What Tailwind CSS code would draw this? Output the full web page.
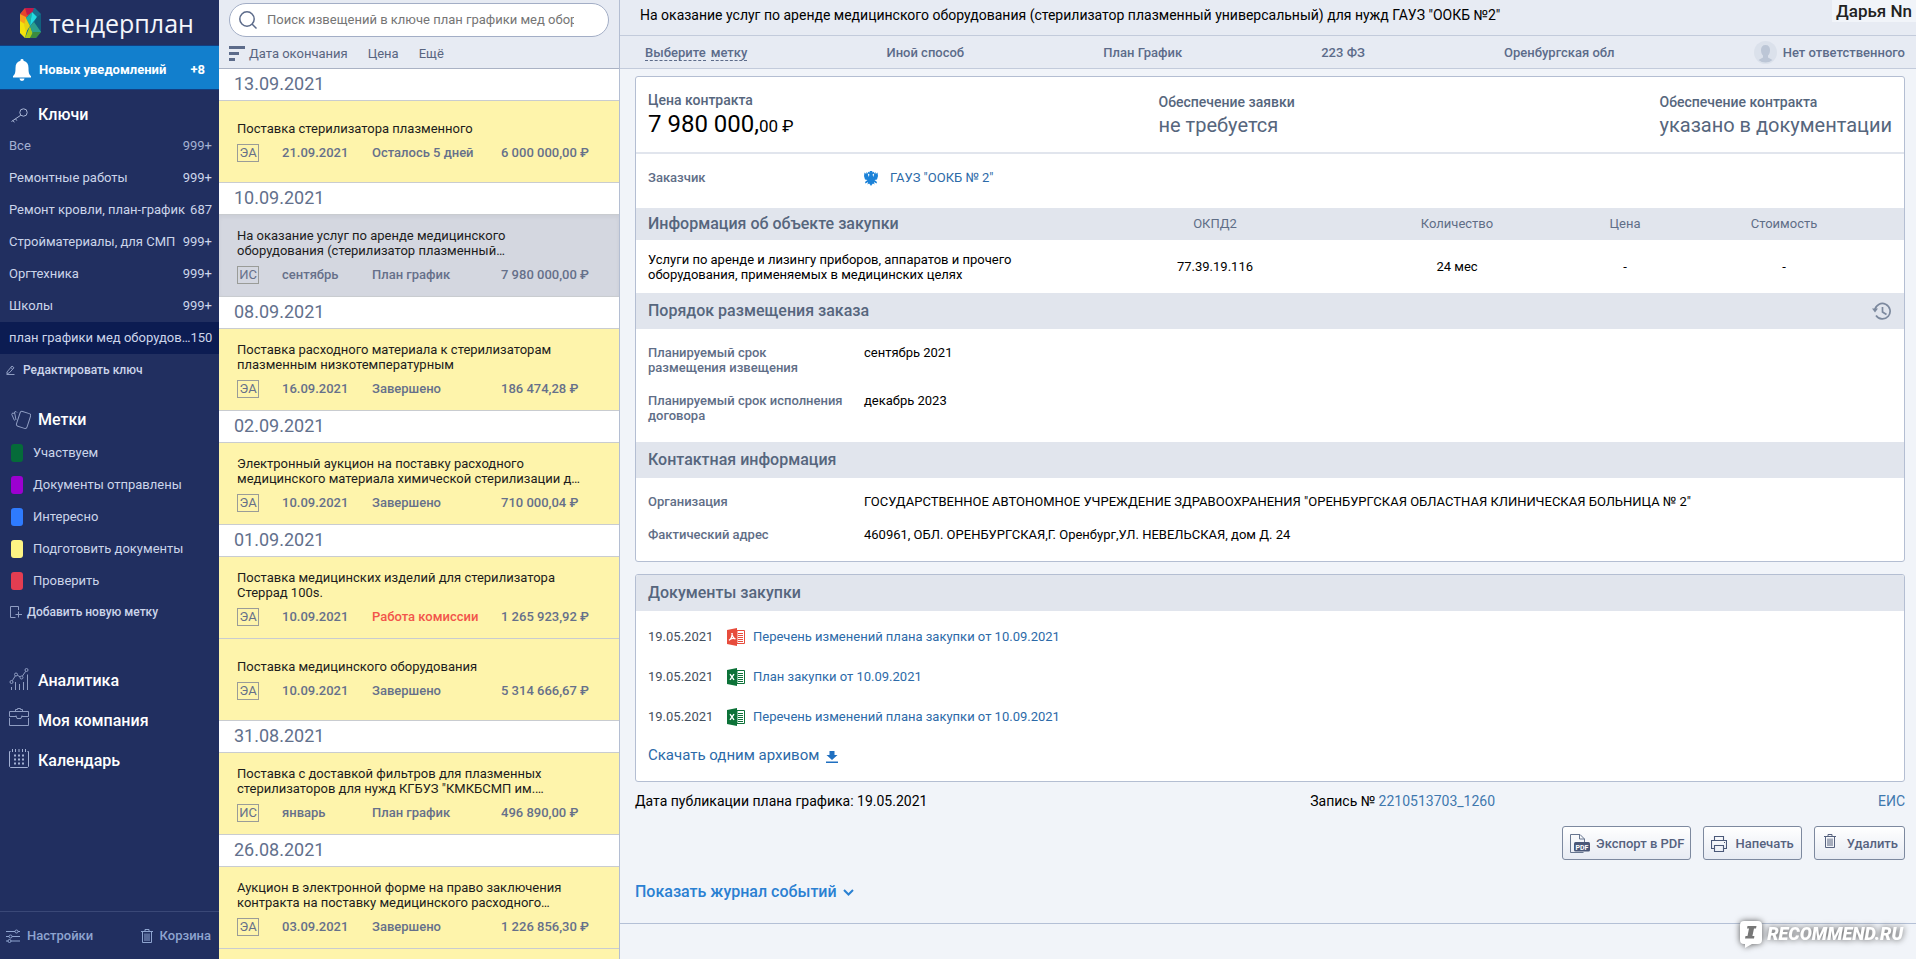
<!DOCTYPE html>
<html lang="ru">
<head>
<meta charset="utf-8">
<title>Тендерплан</title>
<script src="https://cdn.jsdelivr.net/npm/@tailwindcss/browser@4"></script>
</head>
<body class="flex h-screen overflow-hidden bg-[#f1f4f9] font-['Roboto','Noto_Sans',sans-serif] text-[13px] text-black">

<svg class="hidden" aria-hidden="true">
  <symbol id="trash" viewBox="0 0 12 14"><g fill="none" stroke="currentColor"><path d="M0 2.500h12M4 2V.5h4V2M1.500 2.500v11h9v-11M4 4.500v7.500M6 4.500v7.500M8 4.500v7.500"/></g></symbol>
  <symbol id="excel" viewBox="0 0 18 18"><path d="M10 2.500h7.500v13H10z" fill="#fff" stroke="#0c7238"/><path d="M11 5.500h5M11 7.500h5M11 9.500h5M11 11.500h5M11 13.500h5" stroke="#0c7238"/><path d="M0 2 10 0v18L0 16z" fill="#0c7238"/><path d="m3 6.200 4 5.600M7 6.200l-4 5.600" stroke="#fff" stroke-width="1.400"/></symbol>
  <symbol id="pdf" viewBox="0 0 18 18"><path d="M10 2.500h7.500v13H10z" fill="#fff" stroke="#e74c3c"/><path d="M11 5.500h5M11 7.500h5M11 9.500h5M11 11.500h5M11 13.500h5" stroke="#e74c3c"/><path d="M0 2 10 0v18L0 16z" fill="#e74c3c"/><path d="M4.800 5c.4 3 1.200 5 3.700 6M2 12.300c2-1.200 3.200-3.500 3.200-7.300M2 12.300c1.500-1.800 3.800-2.300 6.500-1.500" fill="none" stroke="#fff" stroke-width="1.300"/></symbol>
</svg>

<aside class="flex w-[219px] shrink-0 flex-col bg-[#212f60] text-[#ccd5ea]">
  <a href="#" class="flex h-[45px] shrink-0 items-center gap-2 pl-5">
    <svg class="h-[30px] w-[21px] shrink-0" viewBox="0 0 21 30">
      <path d="M5 0h10l6 6v18l-5 6H5l-5-5V6z" fill="#17708e"/>
      <path d="M0 6 5 0l5 5-4 5z" fill="#e8452c"/><path d="M5 0h9l-2 5-5 2z" fill="#c2184a"/>
      <path d="M0 6l6 3v9l-6 0z" fill="#f9a01b"/><path d="M0 13l8 5-3 12-5-5z" fill="#f4e20c"/>
      <path d="M12 4 6 10l4 8z" fill="#19b5a8"/><path d="M12 4l5 5-7 9z" fill="#22dbe0"/><path d="M17 9l4-3v18l-7-9z" fill="#115f7d"/>
      <path d="M6 10l4 8-4 6-2-7z" fill="#e6d013"/><path d="M10 18l3 8-3 4H5z" fill="#a9c918"/><path d="M10 18l4-4 7 10-8 2z" fill="#2c9f8c"/><path d="M13 24l8 0-5 6h-6z" fill="#3b8b3f"/>
    </svg>
    <span class="font-['Open_Sans','Noto_Sans',sans-serif] text-[25px] leading-7 text-[#f4f6fb]">тендерплан</span>
  </a>
  <a href="#" class="flex h-[45px] shrink-0 items-center border-y border-[#123f83] bg-[#127fcd] pr-[14px] pl-[13px] pt-1 font-bold text-white">
    <svg class="h-[22px] w-[18px]" viewBox="0 0 18 22" fill="#fff"><path d="M9 0a1.500 1.500 0 0 1 1.500 1.700C14 2.500 15.500 5 15.500 9c0 4.500.5 6.500 2.500 8v1.500H0V17c2-1.500 2.500-3.500 2.500-8 0-4 1.500-6.500 5-7.300A1.500 1.500 0 0 1 9 0zM6.500 19.500h5a2.500 2.500 0 0 1-5 0z"/></svg>
    <span class="ml-2 grow">Новых уведомлений</span><span>+8</span>
  </a>
  <h2 class="flex h-[40px] items-center gap-[10px] pt-[10px] pl-[11px] text-[16px] font-medium text-white">
    <svg class="h-[15px] w-[17px]" viewBox="0 0 17 15" fill="none" stroke="#a9b6d6"><circle cx="12.500" cy="4.500" r="3.700"/><path d="M9.800 7.200 0.500 13.500M2 12.500l1.300 1.800M4.500 10.800l1.300 1.800"/></svg>Ключи</h2>
  <nav class="flex flex-col leading-8">
    <a href="#" class="flex justify-between pr-[7px] pl-[9px] text-[#a4b1d2]"><span>Все</span><span>999+</span></a>
    <a href="#" class="flex justify-between pr-[7px] pl-[9px]"><span>Ремонтные работы</span><span>999+</span></a>
    <a href="#" class="flex justify-between pr-[7px] pl-[9px]"><span>Ремонт кровли, план-график</span><span>687</span></a>
    <a href="#" class="flex justify-between pr-[7px] pl-[9px]"><span>Стройматериалы, для СМП</span><span>999+</span></a>
    <a href="#" class="flex justify-between pr-[7px] pl-[9px]"><span>Оргтехника</span><span>999+</span></a>
    <a href="#" class="flex justify-between pr-[7px] pl-[9px]"><span>Школы</span><span>999+</span></a>
    <a href="#" class="flex justify-between bg-[#0c1c52] pr-[7px] pl-[9px] whitespace-nowrap"><span>план графики мед оборудов…</span><span>150</span></a>
    <a href="#" class="flex items-center gap-2 pl-[6px] text-[12px] font-medium"><svg class="h-[10px] w-[9px]" viewBox="0 0 9 10" fill="none" stroke="#8f9dc2"><path d="M.5 9.500h8M1 7l5-6 2 1.800L3.200 8 .8 8.500zM4.800 2.500l2 1.800"/></svg>Редактировать ключ</a>
  </nav>
  <h2 class="mt-[18px] flex h-8 items-center gap-[7px] pl-[11px] text-[16px] font-medium text-white">
    <svg class="h-5 w-5" viewBox="0 0 20 20" fill="none" stroke="#8f9dc2"><rect x="7" y="2" width="11" height="15.500" rx="2" transform="rotate(18 12 10)"/><path d="M6 2.500 5 1.500 3.500 2l1.500 8M3.500 3.500l-2-.5L.8 4.500l2.700 6"/></svg>Метки</h2>
  <nav class="mt-px flex flex-col leading-8">
    <a href="#" class="flex items-center gap-[10px] pl-[11px]"><i class="h-[18px] w-3 rounded-[3px] bg-[#056b39]"></i>Участвуем</a>
    <a href="#" class="flex items-center gap-[10px] pl-[11px]"><i class="h-[18px] w-3 rounded-[3px] bg-[#9c00d0]"></i>Документы отправлены</a>
    <a href="#" class="flex items-center gap-[10px] pl-[11px]"><i class="h-[18px] w-3 rounded-[3px] bg-[#2e7bff]"></i>Интересно</a>
    <a href="#" class="flex items-center gap-[10px] pl-[11px]"><i class="h-[18px] w-3 rounded-[3px] bg-[#fdf484]"></i>Подготовить документы</a>
    <a href="#" class="flex items-center gap-[10px] pl-[11px]"><i class="h-[18px] w-3 rounded-[3px] bg-[#e33d51]"></i>Проверить</a>
    <a href="#" class="flex items-center gap-[5px] pl-[10px] text-[12px] font-medium leading-[30px]"><svg class="h-[13px] w-3" viewBox="0 0 12 13" fill="none" stroke="#8f9dc2"><path d="M8.500 4V.5h-8v11h5M8.500 5.500v6M5.500 8.500h6.500"/></svg>Добавить новую метку</a>
  </nav>
  <nav class="mt-[34px] flex flex-col text-[16px] font-medium leading-10 text-white">
    <a href="#" class="flex items-center gap-[9px] pl-[9px]"><svg class="mb-1 h-[22px] w-5" viewBox="0 0 20 22" fill="none" stroke="#8f9dc2"><circle cx="2.500" cy="14" r="1.500"/><circle cx="7" cy="6.500" r="1.500"/><circle cx="12.500" cy="9.500" r="1.500"/><circle cx="17.500" cy="2" r="1.500"/><path d="m3.300 12.700 3-4.800M8.300 7.300l2.900 1.500M13.300 8.200l3.400-4.900M2.500 19v3M6.500 14v8M10.500 16v6M14.500 14v8M18.500 6.500V22"/></svg>Аналитика</a>
    <a href="#" class="flex items-center gap-[9px] pl-[9px]"><svg class="mb-1 h-[22px] w-5" viewBox="0 0 20 22" fill="none" stroke="#8f9dc2"><path d="M.5 8.500v-5h19v5M.5 10v7.500h19V10M6.500 3.500v-2h2V.5h3v1h2v2M.5 8.500h6.500M13 8.500h6.500M7 7.500l1 3h4l1-3"/></svg>Моя компания</a>
    <a href="#" class="flex items-center gap-[9px] pl-[9px]"><svg class="mb-1 h-[22px] w-5" viewBox="0 0 20 22" fill="none" stroke="#a3b1d3"><path d="M1.500 3.500h-1v15l1 1h17l1-1v-15h-1M3.500 1v3M6.500 1v3M10 1v3M13.500 1v3M16.500 1v3"/><path stroke-width="2" stroke-dasharray="2 2" d="M5 7.500h11M5 11.500h11M5 15.500h11"/></svg>Календарь</a>
  </nav>
  <div class="mt-auto flex h-12 items-center justify-between border-t border-[#3a4877] pr-2 pl-[6px] font-medium text-[#8ea4cf]">
    <a href="#" class="flex items-center gap-[7px]"><svg class="h-[14px] w-[14px]" viewBox="0 0 14 14" fill="none" stroke="currentColor"><path d="M0 2.500h9M12 2.500h2M0 7.500h3M6 7.500h8M0 12h2M5 12h9"/><circle cx="10.500" cy="2.500" r="1.500"/><circle cx="4.500" cy="7.500" r="1.500"/><circle cx="3.500" cy="12" r="1.500"/></svg>Настройки</a>
    <a href="#" class="flex items-center gap-[7px]"><svg class="h-[14px] w-3"><use href="#trash"/></svg>Корзина</a>
  </div>
</aside>

<section class="flex w-[401px] shrink-0 flex-col border-r border-[#b4bed2] bg-white">
  <div class="h-[69px] shrink-0 border-b border-[#aab2c4] bg-[#e7ebf3] px-[10px] pt-[3px] text-[#596580]">
    <label class="flex h-[34px] items-center gap-[10px] rounded-full border border-[#a3aec6] bg-white pr-[34px] pl-[9px]">
      <svg class="h-[18px] w-[18px] shrink-0" viewBox="0 0 18 18" fill="none" stroke="#5c6b8a" stroke-width="1.500"><circle cx="8" cy="8" r="7.200"/><path d="m13 13 4.500 4.500"/></svg>
      <input type="text" aria-label="Поиск извещений" placeholder="Поиск извещений в ключе план графики мед оборудования" class="w-full min-w-0 outline-none placeholder:text-[#757575]">
    </label>
    <div class="flex h-[31px] items-center pt-[2px]">
      <svg class="mr-1 h-[15px] w-4" viewBox="0 0 16 15" fill="#5c6b8a"><path d="M0 0h16v3H0zM0 6h10v3H0zM0 12h6v3H0z"/></svg>
      <button>Дата окончания</button><button class="ml-5">Цена</button><button class="ml-5">Ещё</button>
    </div>
  </div>
  <div id="list" class="grow overflow-hidden"></div>
</section>

<main class="flex min-w-0 grow flex-col">
  <header class="flex h-9 shrink-0 items-center justify-between border-b border-[#c3cbdb] bg-[#e7ebf3] pl-5 pb-1">
    <h1 class="text-[14px]">На оказание услуг по аренде медицинского оборудования (стерилизатор плазменный универсальный) для нужд ГАУЗ "ООКБ №2"</h1>
    <span class="self-start bg-[#f1f4f9] px-1 text-[17px] leading-[22px] font-medium text-[#222]">Дарья Nn</span>
  </header>
  <div class="flex h-[33px] shrink-0 items-center justify-between border-b border-[#c3cbdb] bg-[#e7ebf3] pt-px pr-[11px] pl-[25px] font-medium text-[#5c6b8a]">
    <button class="flex gap-[5px] leading-[15px]"><span class="border-b border-dashed border-[#5c6b8a]">Выберите</span><span class="border-b border-dashed border-[#5c6b8a]">метку</span></button>
    <span>Иной способ</span><span>План График</span><span>223 ФЗ</span><span>Оренбургская обл</span>
    <span class="flex items-center gap-[6px]"><svg class="h-[23px] w-[23px]" viewBox="0 0 23 23"><circle cx="11.500" cy="11.500" r="11.500" fill="#dbe1eb"/><path d="M11.500 4c3 0 4.500 2 4.500 5s-1 4.500-2 5.500v2l4.500 2.500a11 11 0 0 1-14 0L9 16.500v-2C8 13.500 7 12 7 9s1.500-5 4.500-5z" fill="#bcc6d6"/></svg>Нет ответственного</span>
  </div>

  <div class="flex flex-col pt-[7px] pr-[11px] pl-[15px]">
    <div class="overflow-hidden rounded-[3px] border border-[#b4bed2] bg-white">
      <div class="flex h-[77px] items-start justify-between border-b-2 border-[#e1e5ed] px-3 pt-[14px] text-[14px] text-[#56667d]">
        <div><div class="font-medium leading-[18px]">Цена контракта</div><div class="text-[24px] leading-[30px] text-black">7 980 000,<span class="text-[17px]">00 ₽</span></div></div>
        <div class="pt-[2px]"><div class="font-medium leading-[18px]">Обеспечение заявки</div><div class="text-[20px] leading-7">не требуется</div></div>
        <div class="pt-[2px]"><div class="font-medium leading-[18px]">Обеспечение контракта</div><div class="text-[20px] leading-7">указано в документации</div></div>
      </div>
      <div class="flex h-[54px] items-center pl-3 pb-[6px]">
        <span class="w-[216px] font-medium text-[#5f6e87]">Заказчик</span>
        <svg class="mr-3 h-[15px] w-[14px]" viewBox="0 0 14 15" fill="#1c82d8"><path d="M5.500 0h3l-.7 1.500L9.500.8l1 1.500L8.500 3.500 9.300 6l1-3.500L11.500 1l.3 2L13.500 1.500 14 5l-1 3.500-2.500.5L13 11l-.5 1.500L10 11l.5 2.500-1.500-1L8 13.500 7 15l-1-1.500-1-1-1.500 1L4 11l-2.500 1.500L1 11l2.500-2L1 8.500 0 5l.5-3.500L2.200 3l.3-2 1.200 1.500 1 3.500.8-2.500-2-1.200 1-1.500 1.700.7z"/></svg>
        <a href="#" class="text-[#2c6aa8]">ГАУЗ "ООКБ № 2"</a>
      </div>
      <table class="w-full table-fixed text-center">
        <thead><tr class="h-8 bg-[#e1e5ed] text-[#5f6e87]">
          <th class="pl-3 text-left text-[16px] font-medium text-[#56667d]">Информация об объекте закупки</th>
          <th class="w-[242px] font-normal">ОКПД2</th><th class="w-[242px] font-normal">Количество</th><th class="w-[94px] font-normal">Цена</th><th class="w-[232px] pr-2 font-normal">Стоимость</th>
        </tr></thead>
        <tbody><tr class="h-[53px]">
          <td class="pl-3 text-left leading-[15px]"><div class="max-w-[380px]">Услуги по аренде и лизингу приборов, аппаратов и прочего оборудования, применяемых в медицинских целях</div></td>
          <td>77.39.19.116</td><td>24 мес</td><td>-</td><td class="pr-2">-</td>
        </tr></tbody>
      </table>
      <h2 class="flex h-9 items-center justify-between bg-[#e1e5ed] px-3 text-[16px] font-medium text-[#56667d]">Порядок размещения заказа
        <button aria-label="История"><svg class="h-[19px] w-5" viewBox="0 0 20 19" fill="none" stroke="#7c899e" stroke-width="1.700"><path d="M2.800 8a7.700 7.700 0 1 1 1.200 5.500M10.500 5v5l4 2.500"/><path d="M0 6.500h6L3 10.500z" fill="#7c899e" stroke="none"/></svg></button></h2>
      <dl class="grid grid-cols-[216px_1fr] gap-y-[18px] pt-4 pr-3 pb-[19px] pl-3 leading-[15px]">
        <dt class="font-medium text-[#5f6e87]">Планируемый срок<br>размещения извещения</dt><dd>сентябрь 2021</dd>
        <dt class="font-medium text-[#5f6e87]">Планируемый срок исполнения<br>договора</dt><dd>декабрь 2023</dd>
      </dl>
      <h2 class="flex h-9 items-center bg-[#e1e5ed] pl-3 text-[16px] font-medium text-[#56667d]">Контактная информация</h2>
      <dl class="grid grid-cols-[216px_1fr] gap-y-[18px] pt-4 pr-3 pb-[19px] pl-3 leading-[15px]">
        <dt class="font-medium text-[#5f6e87]">Организация</dt><dd>ГОСУДАРСТВЕННОЕ АВТОНОМНОЕ УЧРЕЖДЕНИЕ ЗДРАВООХРАНЕНИЯ "ОРЕНБУРГСКАЯ ОБЛАСТНАЯ КЛИНИЧЕСКАЯ БОЛЬНИЦА № 2"</dd>
        <dt class="font-medium text-[#5f6e87]">Фактический адрес</dt><dd>460961, ОБЛ. ОРЕНБУРГСКАЯ,Г. Оренбург,УЛ. НЕВЕЛЬСКАЯ, дом Д. 24</dd>
      </dl>
    </div>

    <div class="mt-3 overflow-hidden rounded-[3px] border border-[#b4bed2] bg-white">
      <h2 class="flex h-9 items-center bg-[#e1e5ed] pl-3 text-[16px] font-medium text-[#56667d]">Документы закупки</h2>
      <ul class="pt-[6px] pl-3 text-[#2c6aa8]">
        <li class="flex h-10 items-center"><span class="w-[79px] text-[#444f5e]">19.05.2021</span><svg class="mr-2 h-[18px] w-[18px]"><use href="#pdf"/></svg><a href="#">Перечень изменений плана закупки от 10.09.2021</a></li>
        <li class="flex h-10 items-center"><span class="w-[79px] text-[#444f5e]">19.05.2021</span><svg class="mr-2 h-[18px] w-[18px]"><use href="#excel"/></svg><a href="#">План закупки от 10.09.2021</a></li>
        <li class="flex h-10 items-center"><span class="w-[79px] text-[#444f5e]">19.05.2021</span><svg class="mr-2 h-[18px] w-[18px]"><use href="#excel"/></svg><a href="#">Перечень изменений плана закупки от 10.09.2021</a></li>
      </ul>
      <a href="#" class="flex h-[44px] items-center gap-[7px] pb-2 pl-3 text-[15px] text-[#2c6aa8]">Скачать одним архивом
        <svg class="mt-1 h-3 w-3" viewBox="0 0 12 12" fill="#1f6fc0"><path d="M3.500 0h5v4h3L6 9 .5 4h3zM0 10.500h12V12H0z"/></svg></a>
    </div>

    <div class="mt-[9px] flex justify-between text-[14px] leading-5">
      <span>Дата публикации плана графика: 19.05.2021</span>
      <span>Запись № <a href="#" class="text-[#3f78ae]">2210513703_1260</a></span>
      <a href="#" class="text-[#3f78ae]">ЕИС</a>
    </div>
    <div class="mt-[15px] flex justify-end gap-3 font-medium text-[#56627f]">
      <button class="flex h-[34px] items-center gap-[6px] rounded-[3px] border border-[#7d899f] bg-linear-to-b from-white to-[#e7ebf3] pt-px pr-[6px] pl-[7px]"><svg class="h-5 w-5" viewBox="0 0 20 20"><path d="M14.500 8V5L10 .5H.5v18h13M9.500.5V5h5" fill="none" stroke="#66758f"/><rect x="4" y="8" width="16" height="9.500" rx="1.500" fill="#4a5878"/><text x="12" y="15.500" text-anchor="middle" class="fill-white text-[7px] font-bold">PDF</text></svg>Экспорт в PDF</button>
      <button class="flex h-[34px] items-center gap-2 rounded-[3px] border border-[#7d899f] bg-linear-to-b from-white to-[#e7ebf3] px-[7px] pt-px"><svg class="h-4 w-4" viewBox="0 0 16 16" fill="none" stroke="#4a5878" stroke-width="1.100"><path d="M3.500 4.500v-4h9v4M3.500 12.500h-3v-8h15v8h-3M3.500 9.500h9v6h-9zM13 6.500h1"/></svg>Напечать</button>
      <button class="flex h-[34px] items-center gap-[11px] rounded-[3px] border border-[#7d899f] bg-linear-to-b from-white to-[#e7ebf3] pt-px pr-[6px] pl-[9px]"><svg class="mb-[6px] h-[14px] w-3"><use href="#trash"/></svg>Удалить</button>
    </div>
    <button class="mt-[22px] flex items-center gap-[6px] self-start text-[16px] leading-5 font-medium text-[#2a80d2]">Показать журнал событий
      <svg class="h-[7px] w-[11px]" viewBox="0 0 11 7" fill="none" stroke="currentColor" stroke-width="2"><path d="m1 1 4.500 4.500L10 1"/></svg></button>
  </div>
  <footer class="mt-[21px] flex grow items-start justify-end border-t border-[#b4c0d6]">
    <div class="-mt-[4px] flex items-center pr-[13px] drop-shadow-[0_0_3px_#555]">
      <svg class="mr-1 h-7 w-6" viewBox="0 0 24 28"><path d="M5 1h14a4 4 0 0 1 4 4v15a4 4 0 0 1-4 4h-6l-7 4v-4H5a4 4 0 0 1-4-4V5a4 4 0 0 1 4-4z" fill="#fff"/><path d="M8.500 6h9l-.5 2.500h-2l-1.600 7.500h2L15 18.500H6l.5-2.500h2L10 8.500H8z" fill="#777"/></svg>
      <span class="text-[18px] leading-6 font-black text-white italic">RECOMMEND.RU</span>
    </div>
  </footer>
</main>

<script>
const RUB = ' ₽';
const items = [
  {date: '13.09.2021', title: 'Поставка стерилизатора плазменного', type: 'ЭА', when: '21.09.2021', status: 'Осталось 5 дней', price: '6 000 000,00'},
  {date: '10.09.2021', title: 'На оказание услуг по аренде медицинского<br>оборудования (стерилизатор плазменный…', type: 'ИС', when: 'сентябрь', status: 'План график', price: '7 980 000,00', active: true},
  {date: '08.09.2021', title: 'Поставка расходного материала к стерилизаторам<br>плазменным низкотемпературным', type: 'ЭА', when: '16.09.2021', status: 'Завершено', price: '186 474,28'},
  {date: '02.09.2021', title: 'Электронный аукцион на поставку расходного<br>медицинского материала химической стерилизации д…', type: 'ЭА', when: '10.09.2021', status: 'Завершено', price: '710 000,04'},
  {date: '01.09.2021', title: 'Поставка медицинских изделий для стерилизатора<br>Стеррад 100s.', type: 'ЭА', when: '10.09.2021', status: 'Работа комиссии', price: '1 265 923,92', alert: true},
  {title: 'Поставка медицинского оборудования', type: 'ЭА', when: '10.09.2021', status: 'Завершено', price: '5 314 666,67'},
  {date: '31.08.2021', title: 'Поставка с доставкой фильтров для плазменных<br>стерилизаторов для нужд КГБУЗ "КМКБСМП им.…', type: 'ИС', when: 'январь', status: 'План график', price: '496 890,00'},
  {date: '26.08.2021', title: 'Аукцион в электронной форме на право заключения<br>контракта на поставку медицинского расходного…', type: 'ЭА', when: '03.09.2021', status: 'Завершено', price: '1 226 856,30'},
];
document.getElementById('list').innerHTML = items.map(i => `
  ${i.date ? `<h3 class="h-8 border-b border-[#c9ccd0] bg-white pl-[15px] text-[18px] leading-[29px] text-[#62708c]">${i.date}</h3>` : ''}
  <article class="flex h-[82px] flex-col justify-center gap-2 border-b border-[#c9ccd0] pl-[18px] ${i.active ? 'bg-[#d4d7e0] inset-shadow-sm' : 'bg-[#fef4ab]'}">
    <a href="#" class="leading-[15px] text-[#1c1c1c]">${i.title}</a>
    <div class="flex h-[18px] items-center font-medium text-[#66708a]">
      <span class="flex h-[18px] w-[22px] items-center justify-center border border-[#9a9c98] font-normal">${i.type}</span>
      <span class="ml-[23px] w-[90px]">${i.when}</span>
      <span class="w-[129px] ${i.alert ? 'text-[#f2554a]' : ''}">${i.status}</span>
      <span>${i.price}${RUB}</span>
    </div>
  </article>`).join('') + '<div class="h-[82px] bg-[#fef4ab]"></div>';
</script>
</body>
</html>
